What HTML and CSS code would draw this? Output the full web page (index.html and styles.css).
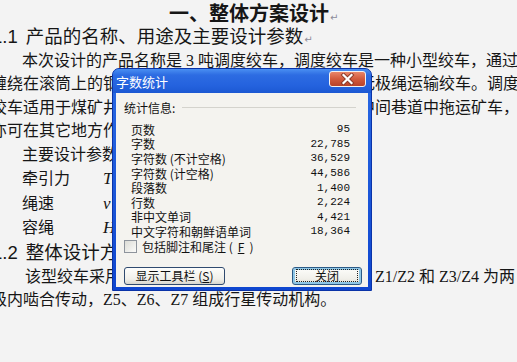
FILE: index.html
```html
<!DOCTYPE html>
<html>
<head>
  <meta charset="UTF-8">
  <title>整体方案设计</title>
  <link rel="stylesheet" href="styles.css">
</head>
<body>
  <div class="doc">
    <div class="doc-title">一、整体方案设计<span class="mark">↵</span></div>
    <div class="heading">1.1 产品的名称、用途及主要设计参数<span class="mark">↵</span></div>
    <div class="para">
      <div class="line indent">本次设计的产品名称是 3 吨调度绞车，调度绞车是一种小型绞车，通过钢丝绳牵引</div>
      <div class="line">缠绕在滚筒上的钢丝绳来牵引矿车的设备，也可用作无极绳运输绞车。调度</div>
      <div class="line">绞车适用于煤矿井下采区工作面、装车站、绞车房及中间巷道中拖运矿车，</div>
      <div class="line">亦可在其它地方作辅助牵引之用。</div>
    </div>
    <div class="params">
      <div class="line indent">主要设计参数：</div>
      <div class="line indent"><span class="pname">牵引力</span><i class="var">T</i> = 14 kN</div>
      <div class="line indent"><span class="pname">绳速</span><i class="var">v</i> = 1.2 m/s</div>
      <div class="line indent"><span class="pname">容绳</span><i class="var">H</i> = 400 m</div>
    </div>
    <div class="heading">1.2 整体设计方案<span class="mark">↵</span></div>
    <div class="para">
      <div class="line wide">该型绞车采用两级行星齿轮传动方式，其中齿轮<span class="gears">Z1/Z2 和 Z3/Z4 为两</span></div>
      <div class="line">级内啮合传动，Z5、Z6、Z7 组成行星传动机构。</div>
    </div>
  </div>

  <div class="dialog">
    <div class="dlg-title">
      <span>字数统计</span>
      <span class="close">
        <svg width="15" height="12" viewBox="0 0 15 12">
          <path d="M3.5 2 L11.5 10 M11.5 2 L3.5 10" stroke="#8a3a2a" stroke-width="4" stroke-linecap="square"/>
          <path d="M3.5 2 L11.5 10 M11.5 2 L3.5 10" stroke="#ffffff" stroke-width="2.2" stroke-linecap="square"/>
        </svg>
      </span>
    </div>
    <div class="dlg-body">
      <div class="info-head"><span>统计信息:</span><span class="rule"></span></div>
      <div class="stats">
        <span>页数</span><span class="num">95</span>
        <span>字数</span><span class="num">22,785</span>
        <span>字符数 (不计空格)</span><span class="num">36,529</span>
        <span>字符数 (计空格)</span><span class="num">44,586</span>
        <span>段落数</span><span class="num">1,400</span>
        <span>行数</span><span class="num">2,224</span>
        <span>非中文单词</span><span class="num">4,421</span>
        <span>中文字符和朝鲜语单词</span><span class="num">18,364</span>
      </div>
      <div class="check-row"><span class="checkbox"></span>包括脚注和尾注 (<u>F</u>)</div>
      <div class="buttons">
        <span class="btn btn-tools">显示工具栏 (<u>S</u>)</span>
        <span class="btn btn-close"><span class="focus">关闭</span></span>
      </div>
    </div>
  </div>
</body>
</html>
```

FILE: styles.css
```css
body {
  margin: 0;
  width: 517px;
  height: 362px;
  overflow: hidden;
  background: #f3f3f3;
  font-family: "Liberation Serif", "Noto Sans CJK SC", serif;
  color: #161616;
  position: relative;
}

.doc {
  margin-left: -9px;
  white-space: nowrap;
}

.mark {
  font-family: "DejaVu Sans", sans-serif;
  font-size: 10px;
  font-weight: normal;
  color: #8c8c9a;
  margin-left: 1px;
}

.doc-title {
  height: 25px;
  line-height: 25px;
  padding-left: 178px;
  font-family: "Noto Sans CJK SC", sans-serif;
  font-size: 20px;
  font-weight: bold;
}

.heading {
  height: 24px;
  line-height: 24px;
  padding-left: 1px;
  word-spacing: 3px;
  font-family: "Liberation Sans", "Noto Sans CJK SC", sans-serif;
  font-size: 18.5px;
}

.para .line {
  height: 23.4px;
  line-height: 23.4px;
  font-size: 16px;
}

.params .line {
  height: 24.5px;
  line-height: 24.5px;
  font-size: 16px;
}

.para .line.wide {
  height: 23px;
  line-height: 23px;
}

.indent {
  padding-left: 31px;
}

.wide {
  padding-left: 34px;
}

.gears {
  margin-left: 14px;
}

.pname {
  display: inline-block;
  width: 81px;
}

.var {
  font-family: "Liberation Serif", serif;
  font-size: 17px;
}

/* word count dialog */
.dialog {
  position: absolute;
  left: 112px;
  top: 68px;
  width: 260px;
  height: 223px;
  box-sizing: border-box;
  padding: 0 3px 3px 3px;
  background: linear-gradient(#2a6ae4, #0f46cf);
  border: 1px solid #0a33a8;
  border-radius: 7px 7px 0 0;
  display: flex;
  flex-direction: column;
  font-family: "Noto Sans CJK SC", sans-serif;
  font-size: 12px;
  color: #111;
}

.dlg-title {
  height: 24px;
  display: flex;
  align-items: center;
  justify-content: space-between;
  padding: 0 5px 0 3px;
  margin: 0 -3px;
  border-radius: 6px 6px 0 0;
  background: linear-gradient(#4a8ff2, #2d6ce2 25%, #2462de 70%, #1c58d2);
  color: white;
  font-size: 13px;
}

.close {
  width: 37px;
  height: 16px;
  margin-top: -4px;
  box-sizing: border-box;
  border: 1px solid #f2f2f2;
  border-radius: 3px;
  background: linear-gradient(#e9866a, #d25a3c 50%, #b8432a);
  display: flex;
  align-items: center;
  justify-content: center;
}

.dlg-body {
  flex: 1;
  background: #f4f3ef;
  padding: 7px 6px 0 8px;
}

.info-head {
  height: 14px;
  display: flex;
  align-items: center;
  gap: 7px;
}

.rule {
  flex: 1;
  height: 0;
  border-top: 1px solid #d4d3cd;
  margin-right: 6px;
}

.stats {
  margin-top: 8px;
  padding: 0 12px 0 7px;
  display: grid;
  grid-template-columns: 1fr auto;
  grid-auto-rows: 14.6px;
  align-items: center;
}

.num {
  font-family: "Liberation Mono", monospace;
  font-size: 11px;
  text-align: right;
}

.check-row {
  margin-top: 1px;
  height: 14px;
  display: flex;
  align-items: center;
  gap: 5px;
}

.checkbox {
  width: 11px;
  height: 11px;
  border: 1px solid #8e949c;
  background: linear-gradient(135deg, #dcdcd6, #fbfbf9);
}

.buttons {
  margin-top: 13px;
  display: flex;
  justify-content: space-between;
}

.btn {
  height: 18px;
  box-sizing: border-box;
  border: 1px solid #2f4a6f;
  border-radius: 3px;
  background: linear-gradient(#fdfdfb, #f0efe9 70%, #d8d6cd);
  display: flex;
  align-items: center;
  justify-content: center;
}

.btn-tools {
  width: 101px;
}

.btn-close {
  width: 70px;
  border-color: #2b5a86;
  box-shadow: inset 0 0 0 2px #8ec6e6;
}

.focus {
  width: 60px;
  height: 11px;
  line-height: 11px;
  text-align: center;
  border: 1px dotted #222;
}
```
